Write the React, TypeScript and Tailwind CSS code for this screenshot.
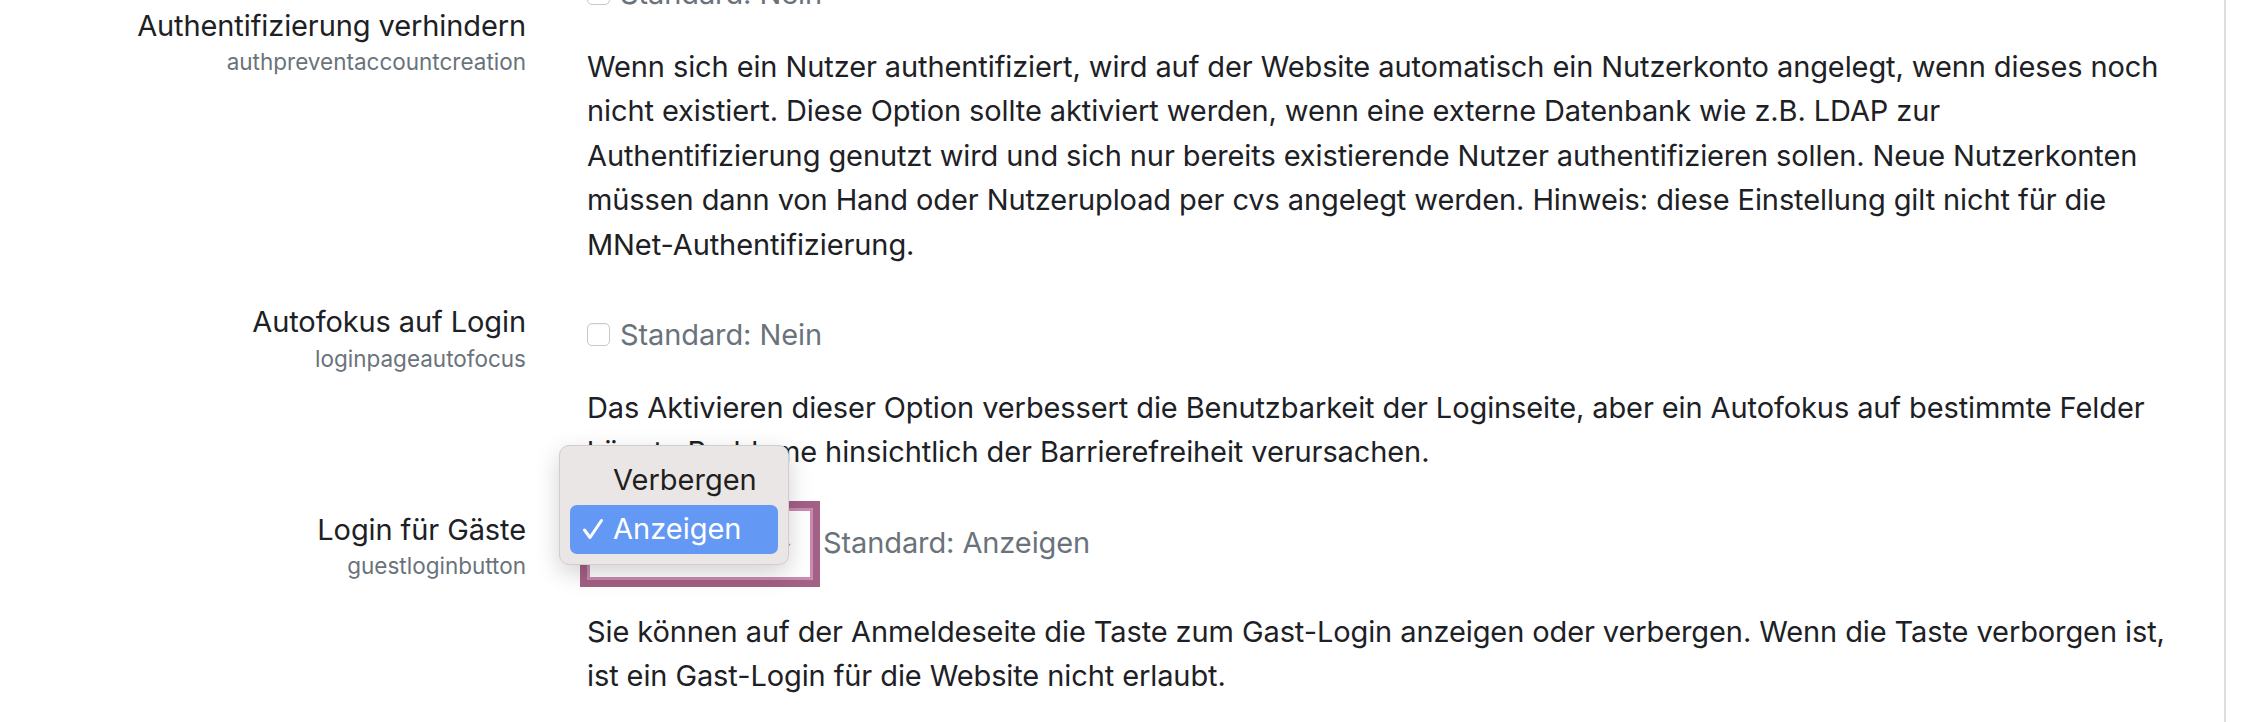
import React from "react";

function Checkbox() {
  return (
    <span className="inline-block h-[23px] w-[23px] shrink-0 rounded-[5px] border border-[#c8c8c8] bg-white shadow-[inset_0_1px_1px_rgba(0,0,0,0.04)]" />
  );
}

function Label({ title, name }: { title: React.ReactNode; name: string }) {
  return (
    <div className="w-[526px] shrink-0 text-right">
      <div className="text-[29px] leading-[44.5px] tracking-[-0.1px] text-[#1d2125]">{title}</div>
      <div className="text-[22.5px] leading-[28px] text-[#6a737b]">{name}</div>
    </div>
  );
}

function Description({ lines }: { lines: string[] }) {
  return (
    <div className="text-[29px] leading-[44.5px] tracking-[-0.1px] text-[#1d2125]">
      {lines.map((l) => (
        <div key={l} className="whitespace-nowrap">
          {l}
        </div>
      ))}
    </div>
  );
}

function GuestSelect() {
  return (
    <div className="relative flex items-center">
      <div className="relative h-[72px] w-[226px] border-[3px] border-[#c98bae] bg-white shadow-[0_0_0_7px_#a36185]">
        <svg
          className="absolute right-[18px] top-[29px]"
          width="12"
          height="12"
          viewBox="0 0 12 12"
          fill="none"
          stroke="#9aa0a6"
          strokeWidth="1.6"
        >
          <path d="M2 4l4 4 4-4" />
        </svg>
      </div>
      <span className="ml-[10px] text-[29px] leading-[44.5px] tracking-[-0.1px] text-[#6a737b]">Standard: Anzeigen</span>

      {/* native select popup */}
      <div className="absolute left-[-28px] top-[-63px] z-10 w-[230px] rounded-[10px] border border-[#d2cdcd] bg-[#ebe6e6] p-[10px] shadow-[0_8px_24px_rgba(0,0,0,0.18)]">
        <div className="flex h-[49px] items-center pl-[43px] text-[29px] text-[#1f1f1f]">Verbergen</div>
        <div className="flex h-[49px] items-center rounded-[7px] bg-[#6399f5] text-[29px] text-white">
          <span className="flex w-[43px] justify-center pl-[2px]">
            <svg width="22" height="22" viewBox="0 0 22 22" fill="none" stroke="white" strokeWidth="3" strokeLinecap="round" strokeLinejoin="round">
              <path d="M2.5 12l5.5 7.5L19.5 2.5" />
            </svg>
          </span>
          Anzeigen
        </div>
      </div>
    </div>
  );
}

export default function App() {
  return (
    <div className="flex h-[722px] w-[2246px] overflow-hidden bg-white font-[Inter,sans-serif]">
      <main className="flex-1">
        <div className="-mt-[41px] flex flex-col gap-[33px]">
          <div className="flex">
            <Label
              title={
                <>
                  Nutzerkontoanlage bei
                  <br />
                  Authentifizierung verhindern
                </>
              }
              name="authpreventaccountcreation"
            />
            <div className="ml-[61px] flex-1">
              <div className="mt-[12px] flex h-[44.5px] items-center gap-[10px]">
                <Checkbox />
                <span className="text-[29px] tracking-[-0.1px] text-[#6a737b]">Standard: Nein</span>
              </div>
              <div className="mt-[29px]">
                <Description
                  lines={[
                    "Wenn sich ein Nutzer authentifiziert, wird auf der Website automatisch ein Nutzerkonto angelegt, wenn dieses noch",
                    "nicht existiert. Diese Option sollte aktiviert werden, wenn eine externe Datenbank wie z.B. LDAP zur",
                    "Authentifizierung genutzt wird und sich nur bereits existierende Nutzer authentifizieren sollen. Neue Nutzerkonten",
                    "müssen dann von Hand oder Nutzerupload per cvs angelegt werden. Hinweis: diese Einstellung gilt nicht für die",
                    "MNet-Authentifizierung.",
                  ]}
                />
              </div>
            </div>
          </div>

          <div className="flex">
            <Label title="Autofokus auf Login" name="loginpageautofocus" />
            <div className="ml-[61px] flex-1">
              <div className="mt-[12px] flex h-[44.5px] items-center gap-[10px]">
                <Checkbox />
                <span className="text-[29px] tracking-[-0.1px] text-[#6a737b]">Standard: Nein</span>
              </div>
              <div className="mt-[29px]">
                <Description
                  lines={[
                    "Das Aktivieren dieser Option verbessert die Benutzbarkeit der Loginseite, aber ein Autofokus auf bestimmte Felder",
                    "könnte Probleme hinsichtlich der Barrierefreiheit verursachen.",
                  ]}
                />
              </div>
            </div>
          </div>

          <div className="flex">
            <Label title="Login für Gäste" name="guestloginbutton" />
            <div className="ml-[61px] flex-1">
              <GuestSelect />
              <div className="mt-[30px]">
                <Description
                  lines={[
                    "Sie können auf der Anmeldeseite die Taste zum Gast-Login anzeigen oder verbergen. Wenn die Taste verborgen ist,",
                    "ist ein Gast-Login für die Website nicht erlaubt.",
                  ]}
                />
              </div>
            </div>
          </div>
        </div>
      </main>
      <div className="w-[2px] shrink-0 bg-[#dedede]" />
      <div className="w-[20px] shrink-0" />
    </div>
  );
}
